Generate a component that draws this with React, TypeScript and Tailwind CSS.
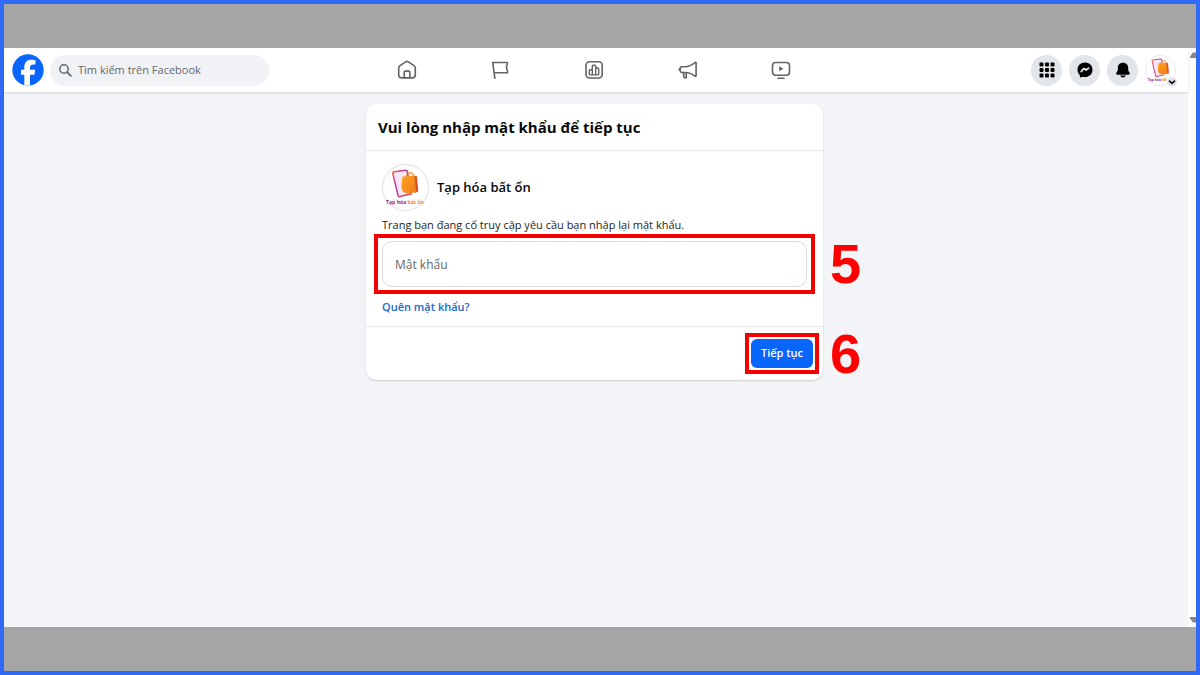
import type { ReactNode } from 'react';

function HomeIcon() {
  return (
    <svg viewBox="0 0 20 20" className="h-5 w-5" fill="none" stroke="currentColor" strokeWidth="1.6" strokeLinejoin="round">
      <path d="M8.7 1.8 3 5.7c-.9.6-1.3 1.4-1.3 2.5v6.6c0 2 1.1 3.1 3.1 3.1h10.4c2 0 3.1-1.1 3.1-3.1V8.2c0-1.1-.4-1.9-1.3-2.5l-5.700-3.9c-.9-.6-1.7-.6-2.6 0Z" />
      <path d="M7.2 17.7v-5.4c0-.8.4-1.2 1.2-1.2h3.2c.8 0 1.2.4 1.2 1.2v5.4" />
    </svg>
  );
}

function FlagIcon() {
  return (
    <svg viewBox="0 0 20 20" className="h-5 w-5" fill="none" stroke="currentColor" strokeWidth="1.6" strokeLinecap="round" strokeLinejoin="round">
      <path d="M4.9 18.3 2.7 2.5h14.4c.4 0 .5.3.4.6L16.4 7l1.2 4.900c.1.5-.1.8-.6.8H4.200" />
    </svg>
  );
}

function ChartIcon() {
  return (
    <svg viewBox="0 0 20 20" className="h-5 w-5" fill="none" stroke="currentColor" strokeWidth="1.6" strokeLinejoin="round">
      <rect x="2" y="1.8" width="16.2" height="16.2" rx="3.5" />
      <path d="M5.3 14.3v-3.6c0-.7.3-1 1-1h2v5.2H6c-.5 0-.7-.2-.7-.6ZM8.3 14.9V6.3c0-.7.4-1 1-1h1.4c.7 0 1 .3 1 1v8.6H8.3ZM11.7 14.900V8h2c.7 0 1 .3 1 1v5.2c0 .5-.2.7-.7.7h-2.3Z" strokeWidth="1.4" />
    </svg>
  );
}

function MegaphoneIcon() {
  return (
    <svg viewBox="0 0 20 20" className="h-5 w-5" fill="none" stroke="currentColor" strokeWidth="1.6" strokeLinecap="round" strokeLinejoin="round">
      <path d="M4 6.700h2.700c4 0 7.200-1.500 10.200-4.200.6-.5 1.200-.3 1.200.5v12.600c0 .8-.6 1-1.200.5-2.900-2.500-6.200-3.600-10.200-3.600H4C2.700 12.500 2 11.200 2 9.600s.7-2.900 2-2.900Z" />
      <path d="m5.300 12.500.7 4.400c.1.700.5 1 1.100 1h.4c.7 0 1-.4.900-1.100L7.900 12.700M2 9.600H1" />
    </svg>
  );
}

function VideoIcon() {
  return (
    <svg viewBox="0 0 20 20" className="h-5 w-5" fill="none" stroke="currentColor" strokeWidth="1.6" strokeLinecap="round">
      <rect x="1.500" y="2.5" width="17" height="12.8" rx="3.2" />
      <path d="M7 18.200h6" />
      <path d="M8.200 6.300v5l4.200-2.500Z" fill="currentColor" stroke="none" />
    </svg>
  );
}

function FacebookLogo() {
  return (
    <svg viewBox="0 0 32 32" className="h-8 w-8">
      <circle cx="16" cy="16" r="15.7" fill="#0866ff" />
      <path d="M12.300 31.300V20.700H9v-4.900h3.300v-2.100c0-5.400 2.400-7.900 7.700-7.900 1 0 2.700.2 3.400.4v4.400c-.4 0-1-.1-1.800-.1-2.600 0-3.600 1-3.600 3.500v1.800h5.200l-.9 4.900H18v10.500a15.700 15.700 0 0 1-5.700.1Z" fill="#fff" />
    </svg>
  );
}

// Shop logo, shown in the header and next to the page name
function ShopAvatar({ className }: { className: string }) {
  return (
    <svg viewBox="0 0 46 46" className={className} role="img" aria-label="Tạp hóa bất ổn">
      <defs>
        <linearGradient id="phone" x1="0" y1="0" x2="1" y2="1">
          <stop offset="0" stopColor="#e8643c" />
          <stop offset="0.4" stopColor="#b5399b" />
          <stop offset="1" stopColor="#e64a4f" />
        </linearGradient>
        <linearGradient id="bag" x1="0" y1="0" x2="1" y2="1">
          <stop offset="0" stopColor="#fba51d" />
          <stop offset="1" stopColor="#f37a20" />
        </linearGradient>
      </defs>
      <circle cx="23" cy="23" r="22.5" fill="#fff" stroke="#dfe1e5" />
      <path d="m12 7.600 11-1.500c1-.1 1.600.3 1.800 1.300l3.700 21.800-11 2.700c-1 .2-1.600-.2-1.800-1.200L10.600 9.400c-.2-1 .3-1.600 1.400-1.800Z" fill="#f8e6f8" stroke="url(#phone)" strokeWidth="1.5" />
      <path d="m31 11.500 3.200.4 1.300 15-3.500 1.500Z" fill="#d94f2b" />
      <path d="m20 12.300 11.600-.8 1.900 16.300-7.800.7c-4 .2-6.700-2.500-6.700-6.300Z" fill="url(#bag)" />
      <path d="M23.500 14c-.8-7 6.500-7.700 7-.8M26 12.500c.2-5.500 5.500-5.500 6 .5" fill="none" stroke="#e8912d" strokeWidth="0.9" />
      <text x="4" y="39" fontFamily="'Open Sans', sans-serif" fontSize="5" fontWeight="700" fill="#8d2f91">
        Tạp hóa <tspan fill="#f08a35">bất ổn</tspan>
      </text>
    </svg>
  );
}

function RoundButton({ label, children }: { label: string; children: ReactNode }) {
  return (
    <button type="button" aria-label={label} className="flex h-[31px] w-[31px] items-center justify-center rounded-full bg-[#e2e5e9] text-black">
      {children}
    </button>
  );
}

const navItems = [
  { label: 'Trang chủ', icon: <HomeIcon /> },
  { label: 'Trang', icon: <FlagIcon /> },
  { label: 'Bảng điều khiển', icon: <ChartIcon /> },
  { label: 'Quảng cáo', icon: <MegaphoneIcon /> },
  { label: 'Video', icon: <VideoIcon /> },
];

function Header() {
  return (
    <header className="relative flex h-11 items-center justify-between bg-white pr-3 pl-2 shadow-[0_1px_2px_rgba(0,0,0,0.12)]">
      <div className="flex flex-1 items-center gap-1.5">
        <a href="#" aria-label="Facebook">
          <FacebookLogo />
        </a>
        <label className="flex h-[31px] w-[219px] items-center gap-1.5 rounded-full bg-[#f0f2f5] px-2">
          <svg viewBox="0 0 14 14" className="h-3.5 w-3.5 shrink-0" fill="none" stroke="#65686c" strokeWidth="1.5" strokeLinecap="round">
            <circle cx="6" cy="6" r="4.2" />
            <path d="m9.300 9.300 3.500 3.500" strokeWidth="1.8" />
          </svg>
          <input
            type="search"
            aria-label="Tìm kiếm trên Facebook"
            placeholder="Tìm kiếm trên Facebook"
            className="w-full min-w-0 bg-transparent text-[11px] outline-none placeholder:text-[#65686c]"
          />
        </label>
      </div>

      <nav className="flex w-[468px] text-[#606367]">
        {navItems.map((item) => (
          <a key={item.label} href="#" aria-label={item.label} className="flex flex-1 justify-center">
            {item.icon}
          </a>
        ))}
      </nav>

      <div className="flex flex-1 items-center justify-end gap-[7px]">
        <RoundButton label="Menu">
          <svg viewBox="0 0 16 16" className="h-4 w-4" fill="currentColor">
            {[0.5, 6, 11.5].map((y) =>
              [0.5, 6, 11.5].map((x) => <rect key={`${x}-${y}`} x={x} y={y} width="4" height="4" rx="1" />)
            )}
          </svg>
        </RoundButton>
        <RoundButton label="Messenger">
          <svg viewBox="0 0 16 16" className="h-4 w-4">
            <path d="M8 .5C3.700.5.5 3.600.5 7.700c0 2.200.9 4 2.300 5.300l.1 1.700c0 .6.600.9 1.100.7l1.600-.7c.8.200 1.600.3 2.400.3 4.300 0 7.500-3.100 7.500-7.300S12.300.5 8 .5Z" fill="currentColor" />
            <path d="m4.300 9.500 2-2.600c.3-.4.7-.4 1.100-.1l1.300 1c.2.200.4.200.6 0l2.300-1.500" fill="none" stroke="#e2e5e9" strokeWidth="1.8" strokeLinecap="round" strokeLinejoin="round" />
          </svg>
        </RoundButton>
        <RoundButton label="Thông báo">
          <svg viewBox="0 0 16 16" className="h-4 w-4" fill="currentColor">
            <path d="M8 .8c-3.200 0-5.200 2.200-5.200 5.200v2c0 .6-.2 1.100-.6 1.600l-.7 1c-.7 1.100-.1 2.100 1.200 2.100h10.600c1.300 0 1.900-1 1.200-2.100l-.7-1c-.4-.5-.6-1-.6-1.600V6C13.200 3 11.200.8 8 .8ZM5.200 13.500c.3 1.200 1.400 2 2.800 2s2.500-.8 2.800-2Z" />
          </svg>
        </RoundButton>
        <button type="button" aria-label="Tài khoản" className="relative h-[31px] w-[31px]">
          <ShopAvatar className="h-[31px] w-[31px]" />
          <span className="absolute -right-0.5 -bottom-0.5 flex h-3 w-3 items-center justify-center rounded-full border border-white bg-[#e2e5e9]">
            <svg viewBox="0 0 8 8" className="h-2 w-2" fill="none" stroke="#111" strokeWidth="1.7">
              <path d="m1 2.600 3 2.800 3-2.800" />
            </svg>
          </span>
        </button>
      </div>
    </header>
  );
}

function PasswordCard() {
  return (
    <form className="w-[457px] rounded-[10px] bg-white shadow-[0_1px_2px_rgba(0,0,0,0.16)]">
      <h1 className="border-b border-[#e7e9ec] px-3 py-3 text-[15px] leading-[22px] font-bold text-[#080809]">
        Vui lòng nhập mật khẩu để tiếp tục
      </h1>

      <div className="border-b border-[#e7e9ec] px-4 pt-[13px] pb-[11px]">
        <div className="flex items-center gap-2">
          <ShopAvatar className="h-[47px] w-[47px]" />
          <span className="text-[13px] font-semibold text-[#080809]">Tạp hóa bất ổn</span>
        </div>
        <label htmlFor="password" className="mt-1.5 block text-[11px] leading-4 text-[#1c1e21]">
          Trang bạn đang cố truy cập yêu cầu bạn nhập lại mật khẩu.
        </label>
        <div className="relative mt-2">
          <input
            id="password"
            type="password"
            placeholder="Mật khẩu"
            className="block h-[46px] w-full rounded-[10px] border border-[#dadde1] px-3 text-[12px] outline-none placeholder:text-[#65686c]"
          />
          {/* Step 5 */}
          <div className="pointer-events-none absolute -inset-x-2 -inset-y-[7px] border-4 border-[#f30000]" />
          <span className="absolute top-1/2 left-full ml-[23px] -translate-y-1/2 font-['Liberation_Sans',sans-serif] text-[56px] leading-none font-bold text-[#ff0000]">
            5
          </span>
        </div>
        <a href="#" className="mt-3 block text-[11px] leading-4 font-semibold text-[#2168cf]">
          Quên mật khẩu?
        </a>
      </div>

      <div className="flex justify-end px-2.5 py-3">
        <div className="relative">
          <button type="button" className="block h-[29px] w-[62px] rounded-md bg-[#0866ff] text-[11px] font-semibold text-white">
            Tiếp tục
          </button>
          {/* Step 6 */}
          <div className="pointer-events-none absolute -inset-1.5 border-4 border-[#f30000]" />
          <span className="absolute top-1/2 left-full ml-[17px] -translate-y-1/2 font-['Liberation_Sans',sans-serif] text-[56px] leading-none font-bold text-[#ff0000]">
            6
          </span>
        </div>
      </div>
    </form>
  );
}

export default function App() {
  return (
    <div className="flex min-h-screen flex-col border-4 border-[#306af6] bg-[#a5a5a5] py-11 font-['Open_Sans','Noto_Sans',sans-serif]">
      <div className="flex flex-1 bg-[#f2f4f7]">
        <div className="flex min-w-0 flex-1 flex-col">
          <Header />
          <main className="flex justify-center pt-3 pr-[3px]">
            <PasswordCard />
          </main>
        </div>

        {/* Scrollbar */}
        <div className="flex w-2 flex-col items-end justify-between bg-[#fcfcfc] py-1">
          <svg viewBox="0 0 6 6" className="h-1.5 w-1.5" fill="#858585">
            <path d="M0 6V4.500L3 .5h3V6Z" />
          </svg>
          <svg viewBox="0 0 6 6" className="h-1.5 w-1.5" fill="#858585">
            <path d="M0 0v1.500l3 4h3V0Z" />
          </svg>
        </div>
      </div>
    </div>
  );
}
